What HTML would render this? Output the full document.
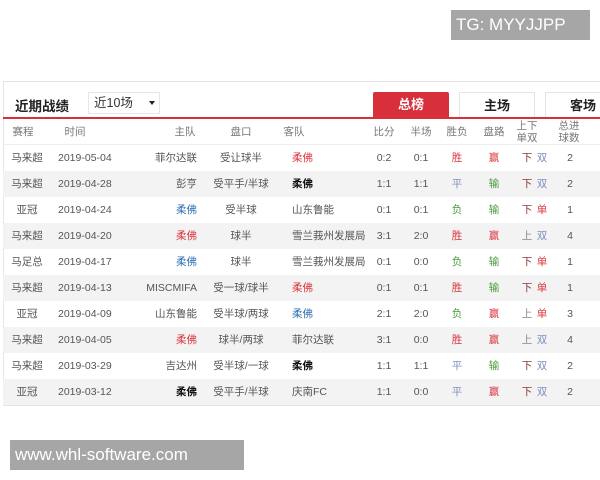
<!DOCTYPE html>
<html><head><meta charset="utf-8"><style>
*{margin:0;padding:0;box-sizing:border-box}
body{width:600px;height:480px;background:#fff;position:relative;overflow:hidden;font-family:"Liberation Sans","Noto Sans CJK SC",sans-serif;font-size:10.5px;color:#555}
.a{position:absolute;white-space:nowrap}
.c{transform:translateX(-50%)}
.r{transform:translateX(-100%)}
.row{position:absolute;left:3px;width:597px;height:26px}
.g{background:#f3f3f3}
.row span{position:absolute;top:7px;white-space:nowrap;line-height:12px}
.red{color:#d9363e}.blue{color:#2f6fb0}.grn{color:#4a9a3a}.blk{color:#111;font-weight:bold}.lb{color:#7e8fc0}.dr{color:#8a3a3a}.gy{color:#888}
</style></head><body>
<div class="a" style="left:451px;top:10px;width:139px;height:30px;background:#a6a6a6;color:#fff;font-size:17px;line-height:30px;padding-left:5px">TG: MYYJJPP</div>
<div class="a" style="left:3px;top:81px;width:597px;height:325px;border:1px solid #e4e4e4;border-right:none"></div>
<div class="a" style="left:15px;top:95px;font-size:13.5px;font-weight:bold;color:#222">近期战绩</div>
<div class="a" style="left:88px;top:92px;width:72px;height:22px;border:1px solid #e6e6e6;font-size:12.5px;color:#333;line-height:20px;padding-left:5px">近10场<span style="position:absolute;left:60px;top:8px;border:3.5px solid transparent;border-top:4px solid #222"></span></div>
<div class="a" style="left:373px;top:92px;width:76px;height:26px;background:#d7303a;color:#fff;font-size:13px;font-weight:bold;text-align:center;line-height:26px;border-radius:2px 2px 0 0">总榜</div>
<div class="a" style="left:459px;top:92px;width:76px;height:26px;border:1px solid #e4e4e4;border-bottom:none;color:#222;font-size:13px;font-weight:bold;text-align:center;line-height:25px">主场</div>
<div class="a" style="left:545px;top:92px;width:70px;height:26px;border:1px solid #e4e4e4;border-bottom:none;color:#222;font-size:13px;font-weight:bold;text-align:left;padding-left:24px;line-height:25px">客场</div>
<div class="a" style="left:3px;top:117px;width:597px;height:2px;background:#d7303a"></div>
<div class="row" style="top:119px;height:26px;border-bottom:1px solid #eee;color:#777">
<span class="c" style="left:20px">赛程</span><span class="c" style="left:72px">时间</span><span class="c" style="left:182px">主队</span><span class="c" style="left:238px">盘口</span><span class="c" style="left:291px">客队</span><span class="c" style="left:381px">比分</span><span class="c" style="left:418px">半场</span><span class="c" style="left:454px">胜负</span><span class="c" style="left:491px">盘路</span>
<span class="c" style="left:524px;top:1px">上下<br>单双</span><span class="c" style="left:566px;top:1px">总进<br>球数</span></div>
<div id="rows"></div>
<div class="a" style="left:10px;top:440px;width:234px;height:30px;background:#a6a6a6;color:#fff;font-size:17px;line-height:30px;padding-left:5px">www.whl-software.com</div>
<script>
var d=[
["马来超","2019-05-04","菲尔达联","","受让球半","柔佛","red","0:2","0:1","胜","red","赢","red","下","双","2"],
["马来超","2019-04-28","彭亨","","受平手/半球","柔佛","blk","1:1","1:1","平","lb","输","grn","下","双","2"],
["亚冠","2019-04-24","柔佛","blue","受半球","山东鲁能","","0:1","0:1","负","grn","输","grn","下","单","1"],
["马来超","2019-04-20","柔佛","red","球半","雪兰莪州发展局","","3:1","2:0","胜","red","赢","red","上","双","4"],
["马足总","2019-04-17","柔佛","blue","球半","雪兰莪州发展局","","0:1","0:0","负","grn","输","grn","下","单","1"],
["马来超","2019-04-13","MISCMIFA","","受一球/球半","柔佛","red","0:1","0:1","胜","red","输","grn","下","单","1"],
["亚冠","2019-04-09","山东鲁能","","受半球/两球","柔佛","blue","2:1","2:0","负","grn","赢","red","上","单","3"],
["马来超","2019-04-05","柔佛","red","球半/两球","菲尔达联","","3:1","0:0","胜","red","赢","red","上","双","4"],
["马来超","2019-03-29","吉达州","","受半球/一球","柔佛","blk","1:1","1:1","平","lb","输","grn","下","双","2"],
["亚冠","2019-03-12","柔佛","blk","受平手/半球","庆南FC","","1:1","0:0","平","lb","赢","red","下","双","2"]];
var h="";
d.forEach(function(r,i){
h+='<div class="row'+(i%2?' g':'')+'" style="top:'+(145+i*26)+'px">'+
'<span class="c" style="left:24px">'+r[0]+'</span>'+
'<span style="left:55px">'+r[1]+'</span>'+
'<span class="r '+r[3]+'" style="left:194px">'+r[2]+'</span>'+
'<span class="c" style="left:238px">'+r[4]+'</span>'+
'<span class="'+r[6]+'" style="left:289px">'+r[5]+'</span>'+
'<span class="c" style="left:381px">'+r[7]+'</span>'+
'<span class="c" style="left:418px">'+r[8]+'</span>'+
'<span class="c '+r[10]+'" style="left:454px">'+r[9]+'</span>'+
'<span class="c '+r[12]+'" style="left:491px">'+r[11]+'</span>'+
'<span class="c '+(r[13]=="下"?"dr":"gy")+'" style="left:524px">'+r[13]+'</span>'+
'<span class="c '+(r[14]=="双"?"lb":"red")+'" style="left:539px">'+r[14]+'</span>'+
'<span class="c" style="left:567px">'+r[15]+'</span></div>';});
document.getElementById("rows").innerHTML=h;
</script>
</body></html>
